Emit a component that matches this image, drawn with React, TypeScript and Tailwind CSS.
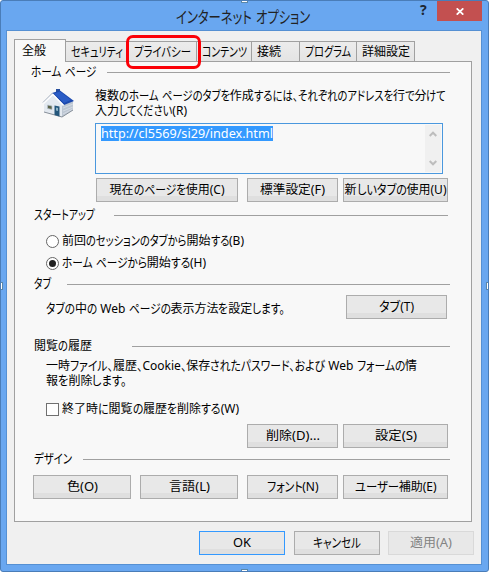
import React, { useLayoutEffect, useRef } from "react"

//kana in UI fonts is drawn narrower than kanji, so split a label into runs
const splitRuns = (text: string) => text.match(/[\u3041-\u30ff、。]+|[^\u3041-\u30ff、。]+/g) || [];
const isKana = (run: string) => /^[\u3041-\u30ff、。]/.test(run);

interface LabelProps {
    text: string,
    width: number,
    className?: string
}

//label squeezes its kana runs until the whole text takes the given width
const Label = ({ text, width, className = "" }: LabelProps) => {
    const ref = useRef<HTMLSpanElement>(null);

    useLayoutEffect(() => {
        const el = ref.current;
        if(!el){
            return;
        }
        const runs = Array.from(el.children) as HTMLElement[];
        runs.forEach((run) => {
            run.style.transform = "none";
            run.style.marginRight = "0px";
        });
        const total = runs.reduce((a, run) => a + run.getBoundingClientRect().width, 0);
        const kana = runs.filter((run) => run.dataset.kana === "true");
        const squeezed = kana.length ? kana : runs;
        const widths = squeezed.map((run) => run.getBoundingClientRect().width);
        const sum = widths.reduce((a, b) => a + b, 0);
        const scale = (width - (total - sum)) / sum;
        squeezed.forEach((run, i) => {
            run.style.transform = `scaleX(${scale})`;
            run.style.marginRight = `${(scale - 1) * widths[i]}px`;
        });
    }, [text, width]);

    return (
        <span ref={ref} className={`inline-block whitespace-pre ${className}`}>
            {splitRuns(text).map((run, i) => (
                <span key={i} data-kana={isKana(run)} className={`inline-block origin-left whitespace-pre ${isKana(run) ? "text-[1.08em] leading-none" : ""}`}>{run}</span>
            ))}
        </span>
    )
}

interface ButtonProps extends LabelProps {
    kind?: "normal" | "default" | "disabled"
}

const Button = ({ text, width, className = "", kind = "normal" }: ButtonProps) => {
    const look = {
        normal: "border-[#acacac] bg-[linear-gradient(#e8e8e8_17px,#dfdfdf_17px)] text-black",
        default: "border-[#3399ff] bg-[linear-gradient(#e8e8e8_17px,#dfdfdf_17px)] text-black",
        disabled: "border-[#d9d9d9] bg-[#e8e8e8] text-[#838383]",
    }[kind];
    return (
        <button className={`flex h-6 shrink-0 items-center justify-center border ${look} ${className}`}>
            <Label text={text} width={width} className="h-4" />
        </button>
    )
}

//group title with the line that runs to the right edge
const GroupTitle = ({ text, width, className = "" }: LabelProps) => (
    <div className={`flex h-4 items-center ${className}`}>
        <Label text={text} width={width} className="h-4" />
        <div className="h-px flex-1 bg-[#a0a0a0]"></div>
    </div>
)

const HouseIcon = () => (
    <svg width="33" height="30" viewBox="0 0 33 30">
        <path d="M2 15 L11 6 L22 17 L20 29 L2 24Z" fill="#e3e9f0" />
        <path d="M20 17 L31 13 L31 22 L20 29Z" fill="#bcc6d2" />
        <path d="M21 20 L31 16 M21 23 L31 19 M21 26 L31 21" stroke="#d9e0e8" strokeWidth="0.8" />
        <path d="M2 24 L20 29 L31 22" fill="none" stroke="#878f99" strokeWidth="1" />
        <path d="M14 1 h4 v4 h-4z" fill="#274f9d" />
        <path d="M10 5 L18 2.5 L32 13 L22 17Z" fill="#1c49ad" />
        <path d="M12 5.5 L18 3.5 L29 12 L22 15Z" fill="#2a5cc6" />
        <path d="M10.5 5 L1 14.5" stroke="#9aa7b8" strokeWidth="1" />
        <path d="M1.5 15.5 L11 6.5 L21.5 17.5" fill="none" stroke="#fdfdfe" strokeWidth="1.5" />
        <path d="M5.5 17 l4.5 1 v3.5 l-4.5 -1z" fill="#5c6449" stroke="#b7c3cf" strokeWidth="0.7" />
        <path d="M12.5 17.5 l5 1 v10 l-5 -1.4z" fill="#24577c" />
        <path d="M14 19.5 l2 .5 v3 l-2 -.5z" fill="#8fb4c6" />
    </svg>
)

const tabs = [
    { text: "セキュリティ", width: 52, className: "w-[63px] pl-[5px]" },
    { text: "プライバシー", width: 57, className: "w-[68px] pl-[5px]" },
    { text: "コンテンツ", width: 45, className: "w-[55px] pl-[5px]" },
    { text: "接続", width: 24, className: "w-[48px] pl-[5px]" },
    { text: "プログラム", width: 46, className: "w-[57px] pl-[5px]" },
    { text: "詳細設定", width: 48, className: "w-[58px] pl-[5px]" },
];

const App = () => {
    return (
        <div className="relative h-[572px] w-[489px] overflow-hidden rounded-[3px] border border-[#4a7db8] bg-[#69a7f0] font-['Noto_Sans','Noto_Sans_CJK_JP',sans-serif] text-[12px] leading-4 text-black [font-feature-settings:'palt']">
            {/* title bar */}
            <div className="flex h-[29px]">
                <div className="w-[175px]"></div>
                <Label text="インターネット オプション" width={134} className="pt-[6px] text-[15px] leading-5 text-[#222]" />
                <div className="flex-1"></div>
                <div className="-mt-px w-[17px] text-[14px] leading-5 font-bold text-[#1d2733]">?</div>
                <button className="flex h-5 w-[45px] items-center justify-center bg-[#c35050]">
                    <svg width="8" height="7" viewBox="0 0 8 7"><path d="M0.7 0.3 L7.3 6.7 M7.3 0.3 L0.7 6.7" stroke="#fff" strokeWidth="1.7" /></svg>
                </button>
                <div className="w-[6px]"></div>
            </div>

            {/* client area */}
            <div className="ml-[5px] h-[535px] w-[476px] border border-[#5590d3] bg-[#f0f0f0] pt-2 pl-[7px]">
                <div className="relative z-10 flex h-[23px] items-end">
                    <div className="h-[23px] w-[52px] border border-b-0 border-[#a0a0a0] bg-[#f8f8f8] pt-[3px] pl-[7px]">
                        <Label text="全般" width={24} />
                    </div>
                    {tabs.map((tab) => (
                        <div key={tab.text} className={`h-[21px] shrink-0 border border-l-0 border-[#a0a0a0] bg-[linear-gradient(#ececec,#e4e4e4)] pt-[2px] ${tab.className}`}>
                            <Label text={tab.text} width={tab.width} />
                        </div>
                    ))}
                </div>
                <div className="-mt-px h-[461px] w-[458px] border border-[#a0a0a0] bg-[#f8f8f8]">
                    {/* home page */}
                    <GroupTitle text="ホーム ページ" width={65} className="mt-[2px] ml-4 w-[419px] gap-[11px]" />
                    <div className="mt-2 flex pl-[27px]">
                        <div className="w-[53px] shrink-0"><HouseIcon /></div>
                        <div className="flex flex-col items-start leading-[15px]">
                            <Label text="複数のホーム ページのタブを作成するには、それぞれのアドレスを行で分けて" width={351} className="h-[15px]" />
                            <Label text="入力してください(R)" width={92} className="h-[15px]" />
                        </div>
                    </div>
                    <div className="mt-[5px] ml-20 flex h-[51px] w-[348px] justify-between border border-[#4a98de] p-px">
                        <div className="mt-px ml-1 h-[15px] bg-[#3399ff] leading-[15px] text-white">
                            <Label text="http://cl5569/si29/index.html" width={172} />
                        </div>
                        <div className="flex w-4 flex-col items-center justify-between bg-[#f0f0f0] py-[6px]">
                            <svg width="8" height="6" viewBox="0 0 8 6"><path d="M0.7 5 L4 1.7 L7.3 5" fill="none" stroke="#bdbdbd" strokeWidth="2" /></svg>
                            <svg width="8" height="6" viewBox="0 0 8 6"><path d="M0.7 1 L4 4.3 L7.3 1" fill="none" stroke="#bdbdbd" strokeWidth="2" /></svg>
                        </div>
                    </div>
                    <div className="mt-1 ml-[81px] flex">
                        <Button text="現在のページを使用(C)" width={115} className="w-[142px]" />
                        <Button text="標準設定(F)" width={65} className="ml-[9px] w-[91px]" />
                        <Button text="新しいタブの使用(U)" width={102} className="ml-[5px] w-[105px]" />
                    </div>

                    {/* startup */}
                    <GroupTitle text="スタートアップ" width={61} className="mt-[5px] ml-[19px] w-[414px] gap-[19px]" />
                    <div className="mt-[10px] ml-[31px] flex h-4 items-center">
                        <div className="mr-[3px] size-[13px] rounded-full border border-[#666] bg-white"></div>
                        <Label text="前回のセッションのタブから開始する(B)" width={182} className="h-4" />
                    </div>
                    <div className="mt-[6px] ml-[31px] flex h-4 items-center">
                        <div className="mr-[3px] flex size-[13px] items-center justify-center rounded-full border border-[#666] bg-white">
                            <div className="size-[7px] rounded-full bg-[#212121]"></div>
                        </div>
                        <Label text="ホーム ページから開始する(H)" width={144} className="h-4" />
                    </div>

                    {/* tabs */}
                    <GroupTitle text="タブ" width={17} className="mt-[5px] ml-[19px] w-[416px] gap-[16px]" />
                    <div className="mt-[3px] ml-[31px] flex justify-between pr-6">
                        <Label text="タブの中の Web ページの表示方法を設定します。" width={239} className="mt-[6px] h-4" />
                        <Button text="タブ(T)" width={35} className="w-[101px]" />
                    </div>

                    {/* browsing history */}
                    <GroupTitle text="閲覧の履歴" width={58} className="mt-[19px] ml-[19px] w-[416px] gap-[40px]" />
                    <div className="mt-[4px] ml-[31px] flex flex-col items-start leading-[15px]">
                        <Label text="一時ファイル、履歴、Cookie、保存されたパスワード、および Web フォームの情" width={371} className="h-[15px]" />
                        <Label text="報を削除します。" width={81} className="h-[15px]" />
                    </div>
                    <div className="mt-[13px] ml-[31px] flex h-4 items-center">
                        <div className="mr-[3px] size-[13px] border border-[#707070] bg-white"></div>
                        <Label text="終了時に閲覧の履歴を削除する(W)" width={177} className="h-4" />
                    </div>
                    <div className="mt-[7px] ml-[232px] flex gap-[5px]">
                        <Button text="削除(D)..." width={54} className="w-[91px]" />
                        <Button text="設定(S)" width={42} className="w-[105px]" />
                    </div>

                    {/* design */}
                    <GroupTitle text="デザイン" width={38} className="mt-[3px] ml-[19px] w-[416px] gap-[11px]" />
                    <div className="mt-[8px] ml-[18px] flex">
                        <Button text="色(O)" width={31} className="w-[98px]" />
                        <Button text="言語(L)" width={41} className="ml-[9px] w-[98px]" />
                        <Button text="フォント(N)" width={52} className="ml-[9px] w-[91px]" />
                        <Button text="ユーザー補助(E)" width={82} className="ml-[5px] w-[105px]" />
                    </div>
                </div>
                <div className="mt-[9px] ml-[185px] flex">
                    <Button text="OK" width={18} className="w-[86px]" kind="default" />
                    <Button text="キャンセル" width={48} className="ml-[9px] w-[86px]" />
                    <Button text="適用(A)" width={42} className="ml-[8px] w-[86px]" kind="disabled" />
                </div>
            </div>

            {/* highlight around the privacy tab */}
            <div className="absolute top-[34px] left-[125px] z-20 h-[34px] w-[75px] rounded-[7px] border-3 border-[#fb0007]"></div>

            {/* resize handles */}
            <div className="absolute -top-px left-[240px] h-[3px] w-[7px] border border-t-0 border-[#5b87a8] bg-white"></div>
            <div className="absolute -bottom-px left-[240px] h-[3px] w-[7px] border border-b-0 border-[#5b87a8] bg-white"></div>
            <div className="absolute top-[281px] -left-px h-[8px] w-[3px] border border-l-0 border-[#5b87a8] bg-white"></div>
            <div className="absolute top-[281px] -right-px h-[8px] w-[3px] border border-r-0 border-[#5b87a8] bg-white"></div>
        </div>
    )
}

export default App
